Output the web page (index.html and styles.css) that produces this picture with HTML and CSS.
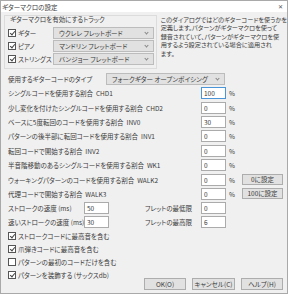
FILE: index.html
```html
<!DOCTYPE html>
<html lang="ja">
<head>
    <meta charset="UTF-8">
    <title>ギターマクロの設定</title>
    <link rel="stylesheet" href="styles.css">
</head>
<body>
<div class="window">
    <!-- タイトルバー -->
    <div class="titlebar">
        <span class="title">ギターマクロの設定</span>
        <span class="close">✕</span>
    </div>
    <div class="content">
        <!-- 上段 -->
        <div class="top">
            <div class="group">
                <div class="groupLabel">ギターマクロを有効にするトラック</div>
                <div class="trackRow">
                    <label class="check"><span class="box on"></span>ギター</label>
                    <div class="select">ウクレレ フレットボード</div>
                </div>
                <div class="trackRow">
                    <label class="check"><span class="box on"></span>ピアノ</label>
                    <div class="select">マンドリン フレットボード</div>
                </div>
                <div class="trackRow">
                    <label class="check"><span class="box on"></span>ストリングス</label>
                    <div class="select">バンジョー フレットボード</div>
                </div>
            </div>
            <p class="desc">このダイアログではどのギターコードを使うかを<br>定義します。パターンがギターマクロを使って<br>録音されていて、パターンがギターマクロを使<br>用するよう設定されている場合に適用され<br>ます。</p>
        </div>

        <!-- コードのタイプ -->
        <div class="typeRow">
            <span>使用するギターコードのタイプ</span>
            <div class="select">フォークギター オープンボイシング</div>
        </div>

        <!-- 割合 -->
        <div class="pctGrid">
            <span>シングルコードを使用する割合&nbsp; CHD1</span>
            <div class="input focus">100</div><span class="pct">%</span><span></span>
            <span>少し変化を付けたシングルコードを使用する割合&nbsp; CHD2</span>
            <div class="input">0</div><span class="pct">%</span><span></span>
            <span>ベースに5度転回のコードを使用する割合&nbsp; INV0</span>
            <div class="input">30</div><span class="pct">%</span><span></span>
            <span>パターンの後半部に転回コードを使用する割合&nbsp; INV1</span>
            <div class="input">0</div><span class="pct">%</span><span></span>
            <span>転回コードで開始する割合&nbsp; INV2</span>
            <div class="input">0</div><span class="pct">%</span><span></span>
            <span>半音階移動のあるシングルコードを使用する割合&nbsp; WK1</span>
            <div class="input">0</div><span class="pct">%</span><span></span>
            <span>ウォーキングパターンのコードを使用する割合&nbsp; WALK2</span>
            <div class="input">0</div><span class="pct">%</span><div class="btn">0に設定</div>
            <span>代理コードで開始する割合&nbsp; WALK3</span>
            <div class="input">0</div><span class="pct">%</span><div class="btn">100に設定</div>
        </div>

        <!-- 速度 -->
        <div class="speedGrid">
            <span>ストロークの速度 (ms)</span>
            <div class="input">50</div><span></span>
            <span>フレットの最低限</span>
            <div class="input">0</div>
            <span>速いストロークの速度 (ms)</span>
            <div class="input">30</div><span></span>
            <span>フレットの最高限</span>
            <div class="input">6</div>
        </div>

        <!-- チェック -->
        <div class="checks">
            <label class="check"><span class="box on"></span>ストロークコードに最高音を含む</label>
            <label class="check"><span class="box on"></span>爪弾きコードに最高音を含む</label>
            <label class="check"><span class="box"></span>パターンの最初のコードだけを含む</label>
            <label class="check"><span class="box on"></span>パターンを装飾する (サックスdb)</label>
        </div>

        <div class="buttons">
            <div class="btn">OK(O)</div>
            <div class="btn">キャンセル(C)</div>
            <div class="btn">ヘルプ(H)</div>
        </div>
    </div>
</div>
</body>
</html>
```

FILE: styles.css
```css
*{
    box-sizing: border-box;
}
body{
    margin: 0;
    font-family: "Noto Sans CJK JP", "Noto Sans", sans-serif;
    font-size: 6.5px;
    font-feature-settings: "palt";
    color: #3a3a3a;
}
.window{
    width: 288px;
    height: 294px;
    background: #f0f0f0;
    border: 1px solid #a9a9a9;
    overflow: hidden;
}
/* タイトルバー */
.titlebar{
    height: 11px;
    background: #fff;
    display: flex;
    justify-content: space-between;
    align-items: center;
    padding: 0 4px 0 1px;
}
.close{
    font-size: 6px;
    color: #555;
}
.content{
    padding: 2px 0 0 3px;
}
.top{
    display: flex;
    align-items: flex-start;
}
/* グループ */
.group{
    width: 167px;
    height: 54px;
    border: 1px solid #dcdcdc;
    margin-top: 1px;
    padding: 0 2px 0 3px;
}
.groupLabel{
    height: 11px;
    line-height: 9px;
    margin-top: -1px;
    padding-left: 2px;
}
.trackRow{
    display: flex;
    align-items: center;
    height: 13px;
}
.trackRow .check{
    width: 45px;
}
.select{
    flex: 1;
    height: 12px;
    background: #e1e1e1;
    border: 1px solid #bcbcbc;
    line-height: 10px;
    padding-left: 5px;
    position: relative;
}
.select::after{
    content: "";
    position: absolute;
    right: 5px;
    top: 3px;
    width: 2px;
    height: 2px;
    border-right: 1px solid #888;
    border-bottom: 1px solid #888;
    transform: rotate(45deg);
}
.check{
    display: flex;
    align-items: center;
    white-space: nowrap;
}
.box{
    width: 8px;
    height: 8px;
    border: 1px solid #555;
    background: #fff;
    margin-right: 2px;
    position: relative;
}
.box.on::after{
    content: "";
    position: absolute;
    left: 2px;
    top: 0;
    width: 2px;
    height: 4px;
    border-right: 1px solid #444;
    border-bottom: 1px solid #444;
    transform: rotate(40deg);
}
.desc{
    margin: 2px 0 0 4px;
    white-space: nowrap;
    line-height: 8.4px;
    font-size: 6.2px;
}
/* タイプ */
.typeRow{
    display: flex;
    align-items: center;
    height: 12px;
    margin-top: 4px;
    padding-left: 4px;
}
.typeRow span{
    width: 98px;
}
.typeRow .select{
    flex: none;
    width: 119px;
}
/* 割合 */
.pctGrid{
    display: grid;
    grid-template-columns: 193px 25px 16px 41px;
    grid-auto-rows: 14.4px;
    align-items: center;
    margin-top: 1px;
    padding-left: 4px;
    white-space: nowrap;
}
.input{
    height: 12px;
    background: #fff;
    border: 1px solid #ababab;
    line-height: 10px;
    padding-left: 2px;
}
.input.focus{
    border-color: #4a95d8;
}
.pct{
    padding-left: 3px;
}
.btn{
    height: 11px;
    background: #e1e1e1;
    border: 1px solid #adadad;
    line-height: 9px;
    text-align: center;
}
/* 速度 */
.speedGrid{
    display: grid;
    grid-template-columns: 76px 25px 36px 56px 25px;
    grid-auto-rows: 14px;
    align-items: center;
    padding-left: 4px;
    white-space: nowrap;
}
.checks{
    display: flex;
    flex-direction: column;
    padding-left: 4px;
}
.checks .check{
    height: 13px;
}
.buttons{
    display: flex;
    justify-content: flex-end;
    gap: 6px;
    padding-right: 4px;
    margin-top: -3px;
}
.buttons .btn{
    width: 42px;
    height: 12px;
    line-height: 10px;
}
.buttons .btn:nth-child(2){
    width: 43px;
}
```
